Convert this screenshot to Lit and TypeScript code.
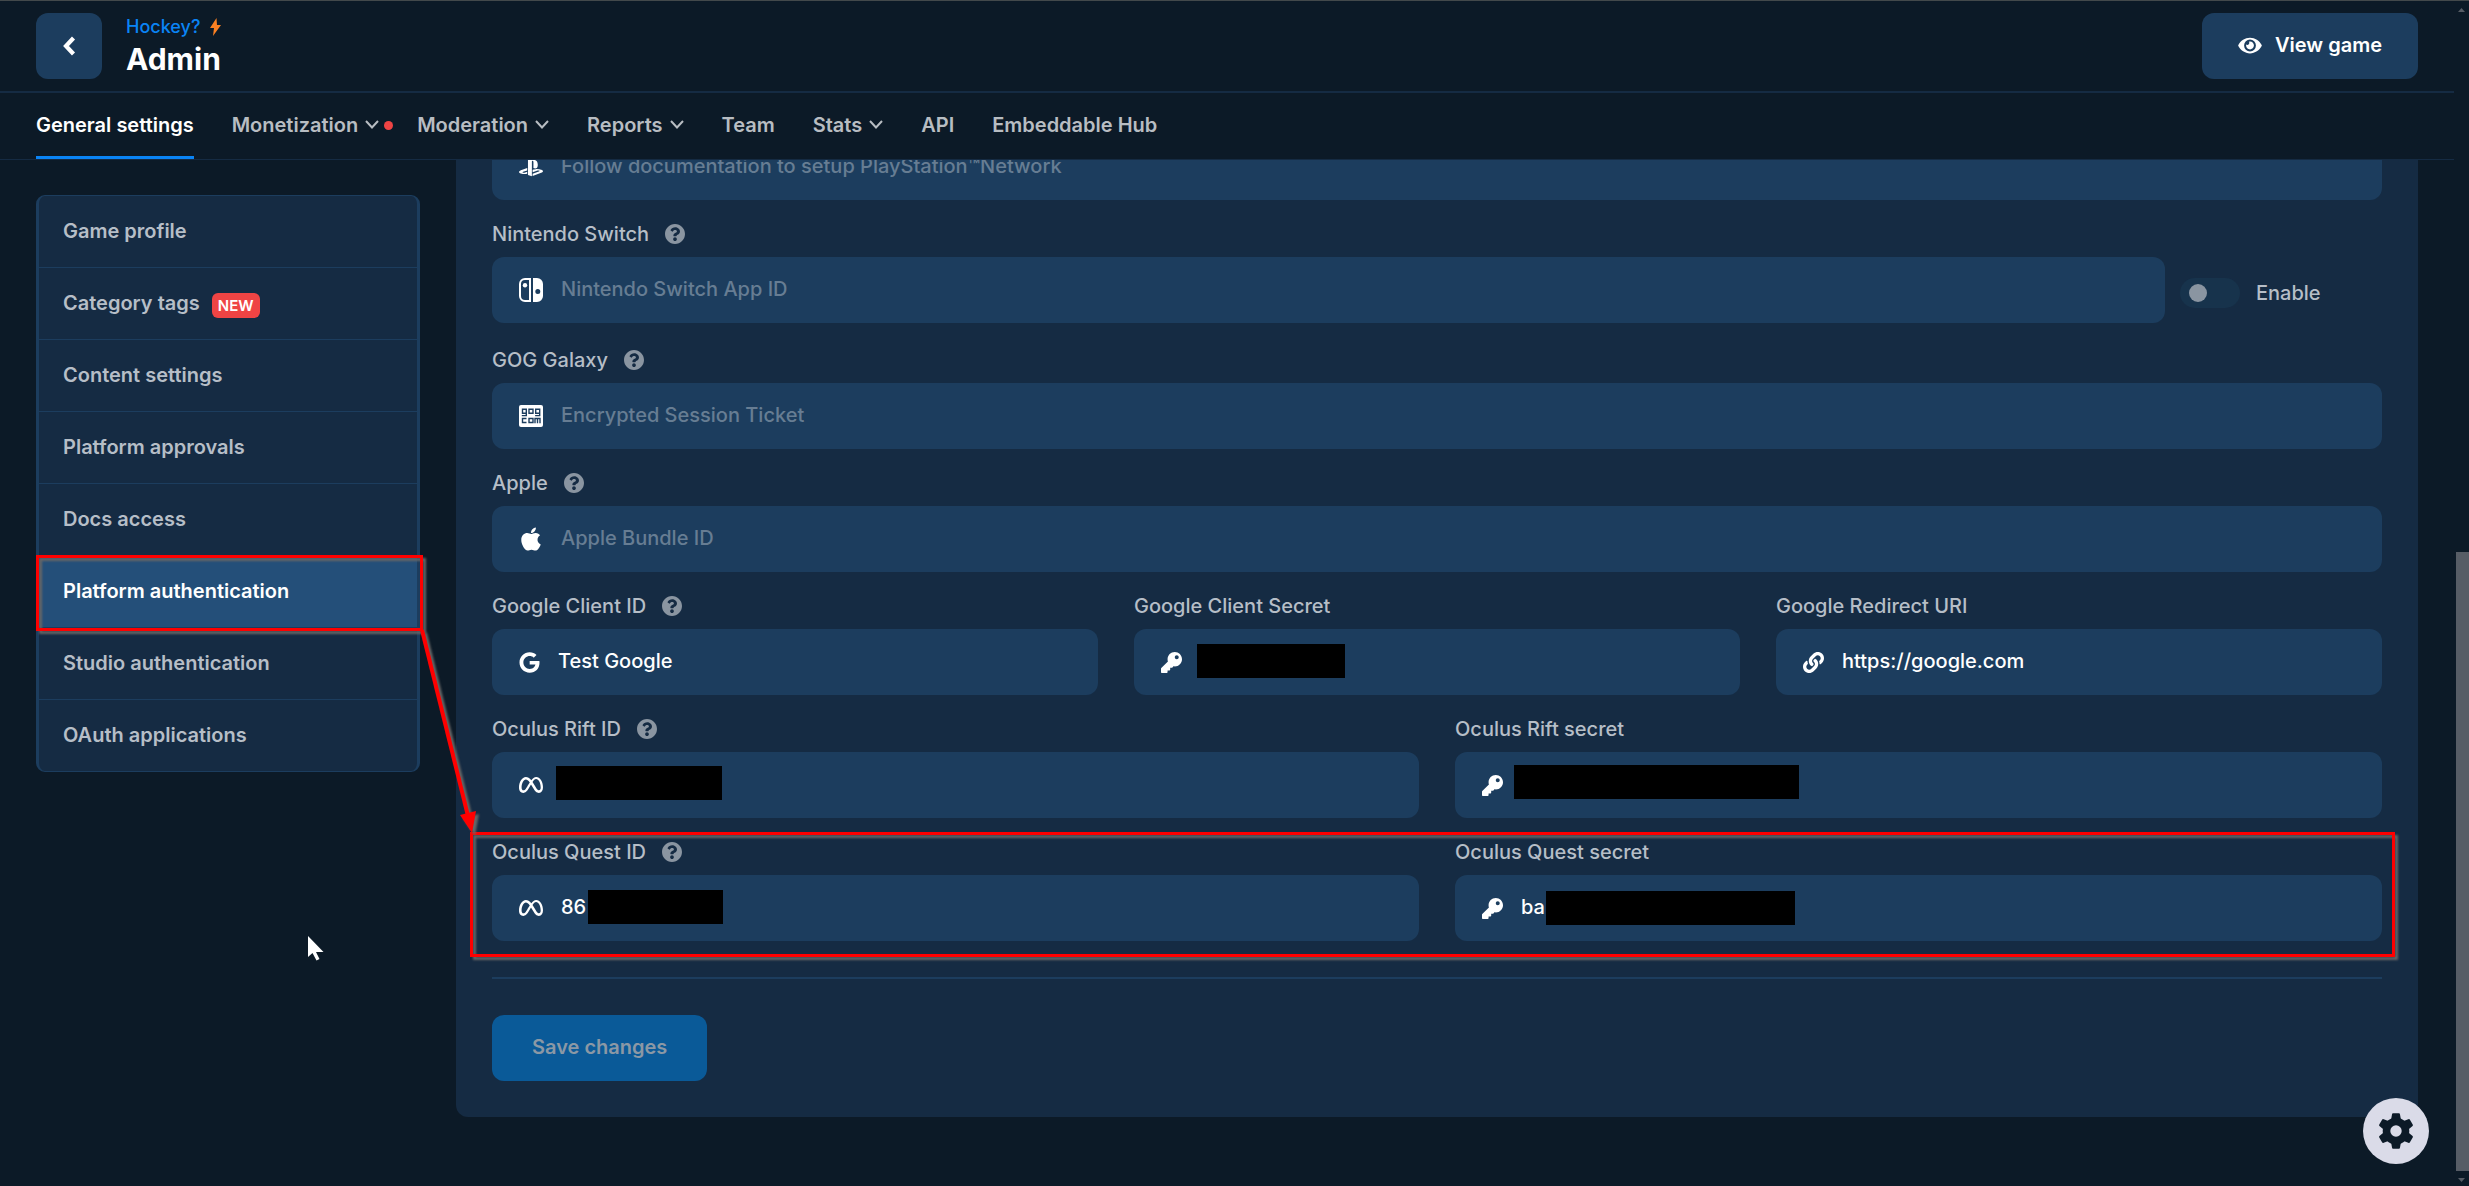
import { LitElement, html, css, svg, nothing, TemplateResult, SVGTemplateResult } from "lit";
import { customElement } from "lit/decorators.js";
import { classMap } from "lit/directives/class-map.js";
import { styleMap } from "lit/directives/style-map.js";

interface Icon {
  box: string;
  size: "wide" | "mid";
  body: SVGTemplateResult;
}

interface Field {
  id: string;
  label: string;
  icon: keyof typeof ICONS;
  help?: boolean;
  placeholder?: string;
  value?: string;
  /** Start, top and width of the bar that hides a secret value. */
  mask?: [number, number, number];
}

const ICONS = {
  playstation: {
    box: "0 0 576 512",
    size: "wide",
    body: svg`<path d="M570.9 372.3c-11.3 14.2-38.8 24.3-38.8 24.3L327 470.2v-54.3l150.9-53.8c17.1-6.1 19.8-14.8 5.8-19.4-13.9-4.6-39.1-3.3-56.2 2.9L327 381.1v-56.4c23.2-7.8 47.1-13.6 75.7-16.8 40.9-4.5 90.9.6 130.2 15.5 44.2 14 49.2 34.7 38 48.9zm-224.4-92.5v-139c0-16.3-3-31.3-18.3-35.6-11.7-3.8-19 7.1-19 23.4v347.9l-93.8-29.8V32c39.9 7.4 98 24.9 129.2 35.4C424.1 94.7 451 128.7 451 205.2c0 74.5-46 102.8-104.5 74.6zM43.2 410.2c-45.4-12.8-53-39.5-32.3-54.8 19.1-14.2 51.7-24.9 51.7-24.9l134.5-47.8v54.5l-96.8 34.6c-17.1 6.1-19.7 14.8-5.8 19.4 13.9 4.6 39.1 3.3 56.2-2.9l46.4-16.9v48.8c-51.6 9.3-101.4 7.3-153.9-10z"/>`,
  },
  nintendo: {
    box: "0 0 24 24",
    size: "wide",
    body: svg`<path fill-rule="evenodd" d="M6 0h6v24H6a6 6 0 0 1-6-6V6a6 6 0 0 1 6-6zm0 2a4 4 0 0 0-4 4v12a4 4 0 0 0 4 4h4V2z"/><circle cx="6" cy="7.3" r="2.2"/><path fill-rule="evenodd" d="M14 0h4a6 6 0 0 1 6 6v12a6 6 0 0 1-6 6h-4zm4.8 10.900a2.500 2.500 0 1 0 0 5 2.500 2.500 0 1 0 0-5z"/>`,
  },
  gog: {
    box: "0 0 24 22",
    size: "wide",
    body: svg`<rect width="24" height="22" rx="2"/><g fill="none" stroke="#1c3d5e" stroke-width="1.400"><path d="M7.300 4.300H3.500v4h3.800M7.300 3.600v7H2.800M10 4.300h4v4h-4zM20.700 4.300h-4v4h4M20.700 3.600v7h-4.600M7.500 13.500h-4v4h4M10 13.500h4v4h-4zM16 18.200v-4.700h5v4.700M18.500 13.500v4.700"/></g>`,
  },
  apple: {
    box: "-32 24 448 464",
    size: "wide",
    body: svg`<path d="M318.700 268.700c-.2-36.700 16.400-64.400 50-84.800-18.800-26.900-47.200-41.700-84.700-44.600-35.500-2.800-74.300 20.700-88.500 20.700-15 0-49.400-19.700-76.400-19.700C63.300 141.200 4 184.800 4 273.500q0 39.300 14.400 81.200c12.800 36.700 59 126.700 107.200 125.200 25.200-.6 43-17.900 75.800-17.900 31.800 0 48.300 17.900 76.400 17.900 48.600-.7 90.400-82.500 102.600-119.300-65.200-30.700-61.700-90-61.700-91.900zm-56.600-164.200c27.300-32.400 24.800-61.900 24-72.500-24.100 1.400-52 16.400-67.900 34.900-17.500 19.800-27.800 44.300-25.600 71.900 26.100 2 49.900-11.400 69.500-34.300z"/>`,
  },
  google: {
    box: "0 0 488 512",
    size: "mid",
    body: svg`<path d="M488 261.800C488 403.300 391.100 504 248 504 110.800 504 0 393.200 0 256S110.800 8 248 8c66.800 0 123 24.500 166.300 64.900l-67.500 64.900C258.500 52.600 94.300 116.600 94.300 256c0 86.500 69.100 156.600 153.700 156.600 98.200 0 135-70.400 140.800-106.900H248v-85.300h236.100c2.300 12.700 3.900 24.900 3.900 41.400z"/>`,
  },
  key: {
    box: "0 0 512 512",
    size: "mid",
    body: svg`<path d="M512 176.001C512 273.203 433.202 352 336 352c-11.220 0-22.190-1.062-32.827-3.069l-24.012 27.014A23.999 23.999 0 0 1 261.223 384H224v40c0 13.255-10.745 24-24 24h-40v40c0 13.255-10.745 24-24 24H24c-13.255 0-24-10.745-24-24v-78.059c0-6.365 2.529-12.470 7.029-16.971l161.802-161.802C163.108 213.814 160 195.271 160 176 160 78.798 238.797.001 335.999 0 433.488-.001 512 78.511 512 176.001zM336 128c0 26.510 21.490 48 48 48s48-21.490 48-48-21.490-48-48-48-48 21.490-48 48z"/>`,
  },
  link: {
    box: "0 0 512 512",
    size: "mid",
    body: svg`<path d="M326.612 185.391c59.747 59.809 58.927 155.698.36 214.590-.11.12-.24.25-.36.37l-67.200 67.200c-59.270 59.270-155.699 59.262-214.960 0-59.270-59.260-59.270-155.700 0-214.960l37.106-37.106c9.840-9.840 26.786-3.300 27.294 10.606.648 17.722 3.826 35.527 9.690 52.721 1.986 5.822.567 12.262-3.783 16.612l-13.087 13.087c-28.026 28.026-28.905 73.660-1.155 101.960 28.024 28.579 74.086 28.749 102.325.51l67.200-67.190c28.191-28.191 28.073-73.757 0-101.830-3.701-3.694-7.429-6.564-10.341-8.569a16.037 16.037 0 0 1-6.947-12.606c-.396-10.567 3.348-21.456 11.698-29.806l21.054-21.055c5.521-5.521 14.182-6.199 20.584-1.731a152.482 152.482 0 0 1 20.522 17.197zM467.547 44.449c-59.261-59.262-155.690-59.270-214.960 0l-67.200 67.200c-.12.12-.25.25-.36.37-58.566 58.892-59.387 154.781.36 214.590a152.454 152.454 0 0 0 20.521 17.196c6.402 4.468 15.064 3.789 20.584-1.731l21.054-21.055c8.350-8.350 12.094-19.239 11.698-29.806a16.037 16.037 0 0 0-6.947-12.606c-2.912-2.005-6.640-4.875-10.341-8.569-28.073-28.073-28.191-73.639 0-101.830l67.200-67.190c28.239-28.239 74.300-28.069 102.325.51 27.750 28.300 26.872 73.934-1.155 101.960l-13.087 13.087c-4.350 4.350-5.769 10.790-3.783 16.612 5.864 17.194 9.042 34.999 9.690 52.721.509 13.906 17.454 20.446 27.294 10.606l37.106-37.106c59.271-59.259 59.271-155.699.001-214.959z"/>`,
  },
  meta: {
    box: "0 0 640 512",
    size: "wide",
    body: svg`<path d="M640 317.900C640 409.200 600.600 466.400 529.700 466.400C467.100 466.400 433.900 431.800 372.800 329.800L341.400 277.200C333.100 264.700 326.900 253 320.200 242.200C300.100 276 273.100 325.200 273.100 325.200C206.100 441.800 168.500 466.400 116.200 466.400C43.400 466.400 0 409.100 0 320.500C0 177.500 79.800 42.400 183.900 42.400C234.100 42.400 277.700 67.100 328.700 131.900C365.800 81.800 406.800 42.400 459.300 42.400C558.400 42.400 640 168.100 640 317.900zM287.400 192.200C244.500 130.100 216.500 111.700 183 111.700C121.100 111.700 69.200 217.800 69.200 321.700C69.200 370.200 87.700 397.400 118.800 397.400C149 397.400 167.800 378.400 222 293.600C222 293.600 246.700 254.500 287.400 192.200zM531.200 397.400C563.400 397.400 578.100 369.900 578.100 322.500C578.100 198.300 523.800 97.100 454.900 97.100C421.700 97.100 393.800 123 360 175.100C369.400 188.900 379.100 204.100 389.300 220.500L426.800 282.900C485.500 377 500.300 397.400 531.200 397.400z"/>`,
  },
} satisfies Record<string, Icon>;

const TABS = [
  { text: "General settings", active: true },
  { text: "Monetization", menu: true, dot: true },
  { text: "Moderation", menu: true },
  { text: "Reports", menu: true },
  { text: "Team" },
  { text: "Stats", menu: true },
  { text: "API" },
  { text: "Embeddable Hub" },
] as { text: string; active?: boolean; menu?: boolean; dot?: boolean }[];

const SECTIONS = [
  { text: "Game profile" },
  { text: "Category tags", badge: "NEW" },
  { text: "Content settings" },
  { text: "Platform approvals" },
  { text: "Docs access" },
  { text: "Platform authentication", active: true },
  { text: "Studio authentication" },
  { text: "OAuth applications" },
] as { text: string; badge?: string; active?: boolean }[];

const GOG: Field = { id: "gog", label: "GOG Galaxy", icon: "gog", help: true, placeholder: "Encrypted Session Ticket" };
const APPLE: Field = { id: "apple", label: "Apple", icon: "apple", help: true, placeholder: "Apple Bundle ID" };
const SWITCH: Field = {
  id: "switch",
  label: "Nintendo Switch",
  icon: "nintendo",
  help: true,
  placeholder: "Nintendo Switch App ID",
};
const GOOGLE: Field[] = [
  { id: "google-id", label: "Google Client ID", icon: "google", help: true, value: "Test Google" },
  { id: "google-secret", label: "Google Client Secret", icon: "key", mask: [63, 15, 148] },
  { id: "google-uri", label: "Google Redirect URI", icon: "link", value: "https://google.com" },
];
const RIFT: Field[] = [
  { id: "rift-id", label: "Oculus Rift ID", icon: "meta", help: true, mask: [64, 14, 166] },
  { id: "rift-secret", label: "Oculus Rift secret", icon: "key", mask: [59, 13, 285] },
];
const QUEST: Field[] = [
  { id: "quest-id", label: "Oculus Quest ID", icon: "meta", help: true, value: "86", mask: [96, 15, 135] },
  { id: "quest-secret", label: "Oculus Quest secret", icon: "key", value: "ba", mask: [91, 16, 249] },
];

@customElement("app-root")
export class AppRoot extends LitElement {
  static styles = css`
    :host {
      display: block;
      --page: #0c1a27;
      --panel: #152b43;
      --field: #1c3d5e;
      --muted: #b8bdc2;
      --soft: #b6bec7;
      color: #fff;
      background: var(--page);
      font: 500 20px/30px Inter, "Liberation Sans", sans-serif;
    }
    *,
    *::before {
      box-sizing: border-box;
    }
    svg {
      display: block;
      flex: none;
      fill: currentColor;
    }
    a {
      color: inherit;
      text-decoration: none;
    }
    button,
    input {
      font: inherit;
      color: inherit;
      border: 0;
      margin: 0;
      padding: 0;
      background: none;
    }
    .window {
      position: relative;
      display: grid;
      grid-template-columns: minmax(0, 1fr) 15px;
      min-height: 100vh;
      border-top: 1px solid #43494b;
      overflow: hidden;
    }
    .top {
      position: relative;
      z-index: 1;
      background: var(--page);
      border-bottom: 1px solid var(--panel);
    }
    .header {
      display: flex;
      align-items: center;
      gap: 24px;
      padding: 12px 36px;
      border-bottom: 2px solid var(--panel);
    }
    .btn {
      display: flex;
      align-items: center;
      justify-content: center;
      height: 66px;
      border-radius: 12px;
      background: var(--field);
      font-weight: 600;
    }
    .back {
      width: 66px;
    }
    .view {
      gap: 13px;
      padding: 0 36px 2px;
      margin-left: auto;
    }
    .title {
      display: flex;
      flex-direction: column;
      padding-top: 2px;
    }
    .game {
      display: flex;
      align-items: center;
      gap: 10px;
      color: #0a84f5;
      font-size: 18px;
      line-height: 24px;
    }
    .name {
      margin: 0;
      font-size: 30px;
      line-height: 40px;
      font-weight: 700;
    }
    .tabs {
      display: flex;
      gap: 38px;
      padding: 0 36px;
      font-weight: 600;
      color: var(--muted);
    }
    .tab {
      position: relative;
      display: flex;
      align-items: center;
      gap: 7px;
      height: 66px;
      border-bottom: 3px solid transparent;
      white-space: nowrap;
    }
    .tab.active {
      color: #fff;
      border-color: #0a84f5;
    }
    .dot {
      position: absolute;
      right: -14px;
      top: 28px;
      width: 9px;
      height: 9px;
      border-radius: 50%;
      background: #ef4444;
    }
    .body {
      display: grid;
      grid-template-columns: 384px minmax(0, 1fr);
      gap: 36px;
      align-items: start;
      padding: 0 36px 36px;
    }
    .side {
      margin-top: 35px;
      border: 1px solid var(--field);
      border-width: 1px 3px;
      border-radius: 9px;
      background: var(--panel);
      font-weight: 600;
      color: var(--soft);
    }
    .section {
      position: relative;
      display: flex;
      align-items: center;
      gap: 12px;
      height: 71px;
      padding: 0 24px 2px;
    }
    .section + .section {
      height: 72px;
      border-top: 1px solid var(--field);
    }
    .section.active {
      background: #244f79;
      color: #fff;
    }
    .badge {
      padding: 0 6px;
      margin-top: 6px;
      border-radius: 6px;
      background: #ef4444;
      color: #fff;
      font-size: 15px;
      line-height: 25px;
    }
    .panel {
      display: flex;
      flex-direction: column;
      gap: 18px;
      margin-top: -26px;
      padding: 0 36px 36px;
      border-radius: 0 0 12px 12px;
      background: var(--panel);
    }
    .row {
      position: relative;
      display: grid;
      grid-auto-flow: column;
      grid-auto-columns: minmax(0, 1fr);
      gap: 36px;
    }
    .row.switch {
      grid-template-columns: minmax(0, 1fr) 202px;
      gap: 15px;
      align-items: end;
      padding-bottom: 3px;
    }
    .label {
      display: flex;
      align-items: center;
      gap: 16px;
      height: 32px;
      margin-bottom: 7px;
      color: var(--soft);
    }
    .help {
      color: #8a95a1;
    }
    .field {
      position: relative;
      display: flex;
      align-items: center;
      gap: 18px;
      height: 66px;
      padding: 0 27px;
      border-radius: 12px;
      background: var(--field);
    }
    .input {
      flex: 1;
      min-width: 0;
      height: 64px;
      padding-bottom: 2px;
      outline: none;
    }
    .input::placeholder {
      color: #677d93;
      opacity: 1;
    }
    .mask {
      position: absolute;
      height: 34px;
      background: #000;
    }
    .toggle {
      display: flex;
      align-items: center;
      gap: 16px;
      height: 66px;
      padding-top: 5px;
      color: var(--soft);
    }
    .knob {
      appearance: none;
      display: flex;
      align-items: center;
      width: 60px;
      height: 30px;
      padding: 0 9px;
      border-radius: 15px;
      background: #17334c;
    }
    .knob::before {
      content: "";
      width: 18px;
      height: 18px;
      border-radius: 50%;
      background: #8a95a1;
    }
    .actions {
      padding-top: 36px;
      margin-top: 18px;
      border-top: 2px solid var(--field);
    }
    .save {
      padding: 0 40px 2px;
      background: #0a5a98;
      color: #8b98a5;
    }
    .scroll {
      display: flex;
      flex-direction: column;
      align-items: center;
      padding: 7px 0 4px;
      color: #575d66;
    }
    .before {
      flex: 538;
    }
    .thumb {
      flex: 616;
      align-self: stretch;
      margin-left: 2px;
      background: currentColor;
    }
    .scroll svg:last-child {
      margin-top: 7px;
    }
    .gear {
      position: absolute;
      right: 40px;
      bottom: 22px;
      width: 66px;
      height: 66px;
      display: grid;
      place-items: center;
      border-radius: 50%;
      background: #dadbe8;
      color: var(--page);
    }
    .mark {
      position: absolute;
      border: 3px solid #f00;
      filter: drop-shadow(3px 3px 1px #666);
      pointer-events: none;
      z-index: 1;
    }
    .mark.on-section {
      inset: -1px -6px -4px -3px;
    }
    .mark.on-row {
      inset: -4px -13px -16px -22px;
    }
    .arrow {
      position: absolute;
      left: 410px;
      top: 620px;
      z-index: 2;
      filter: drop-shadow(3px 3px 1px #666);
      pointer-events: none;
    }
    .cursor {
      position: absolute;
      left: 306px;
      top: 932px;
    }
  `;

  private icon(name: keyof typeof ICONS): TemplateResult {
    const { box, size, body } = ICONS[name];
    const side = size === "wide" ? 24 : 21;
    return html`<svg viewBox=${box} width=${side} height=${side} aria-hidden="true">${body}</svg>`;
  }

  private control(f: Field): TemplateResult {
    return html`<div class="field">
      ${this.icon(f.icon)}
      <input
        class="input"
        id=${f.id}
        type="text"
        aria-label=${f.label ? nothing : "PlayStation Network"}
        .value=${f.value ?? ""}
        placeholder=${f.placeholder ?? nothing}
      />
      ${f.mask
        ? html`<span
            class="mask"
            style=${styleMap({ left: `${f.mask[0]}px`, top: `${f.mask[1]}px`, width: `${f.mask[2]}px` })}
          ></span>`
        : nothing}
    </div>`;
  }

  private group(f: Field): TemplateResult {
    return html`<div class="group">
      <label class="label" for=${f.id}>
        ${f.label}
        ${f.help
          ? html`<svg class="help" viewBox="8 8 496 496" width="20" height="20" aria-hidden="true">
              <path d="M504 256c0 136.997-111.043 248-248 248S8 392.997 8 256C8 119.083 119.043 8 256 8s248 111.083 248 248zM262.655 90c-54.497 0-89.255 22.957-116.549 63.758-3.536 5.286-2.353 12.415 2.715 16.258l34.699 26.310c5.205 3.947 12.621 3.008 16.665-2.122 17.864-22.658 30.113-35.797 57.303-35.797 20.429 0 45.698 13.148 45.698 32.958 0 14.976-12.363 22.667-32.534 33.976C247.128 238.528 216 254.941 216 296v4c0 6.627 5.373 12 12 12h56c6.627 0 12-5.373 12-12v-1.333c0-28.462 83.186-29.647 83.186-106.667 0-58.002-60.165-102-116.531-102zM256 338c-25.365 0-46 20.635-46 46 0 25.364 20.635 46 46 46s46-20.636 46-46c0-25.365-20.635-46-46-46z" />
            </svg>`
          : nothing}
      </label>
      ${this.control(f)}
    </div>`;
  }

  private tab(t: (typeof TABS)[number]): TemplateResult {
    const cls = classMap({ tab: true, active: !!t.active });
    return t.menu
      ? html`<button class=${cls} type="button">
          ${t.text}
          <svg width="14" height="10" viewBox="0 0 14 10" aria-hidden="true">
            <path d="M1 1l6 6.500L13 1" fill="none" stroke="currentColor" stroke-width="2" />
          </svg>
          ${t.dot ? html`<span class="dot"></span>` : nothing}
        </button>`
      : html`<a class=${cls} href="#">${t.text}</a>`;
  }

  render() {
    return html`<div class="window">
      <div class="page">
        <div class="top">
          <header class="header">
            <button class="btn back" type="button" aria-label="Back">
              <svg width="14" height="20" viewBox="0 0 14 20">
                <path d="M11.500 2L4 10l7.500 8" fill="none" stroke="currentColor" stroke-width="4.200" />
              </svg>
            </button>
            <div class="title">
              <a class="game" href="#"
                >Hockey?
                <svg width="11" height="18" viewBox="0 0 11 18"><path d="M6.500 0L0 10h4L3 18 11 7H7z" fill="#fb8022" /></svg
              ></a>
              <h1 class="name">Admin</h1>
            </div>
            <a class="btn view" href="#">
              <svg width="24" height="21" viewBox="0 0 576 512" aria-hidden="true">
                <path d="M572.520 241.400C518.290 135.590 410.930 64 288 64S57.680 135.640 3.480 241.410a32.350 32.350 0 0 0 0 29.190C57.710 376.410 165.070 448 288 448s230.320-71.640 284.520-177.410a32.350 32.350 0 0 0 0-29.190zM288 400a144 144 0 1 1 144-144 143.930 143.930 0 0 1-144 144zm0-240a95.310 95.310 0 0 0-25.310 3.790 47.850 47.850 0 0 1-66.900 66.900A95.780 95.780 0 1 0 288 160z" />
              </svg>
              View game
            </a>
          </header>
          <nav class="tabs">${TABS.map((t) => this.tab(t))}</nav>
        </div>
        <div class="body">
          <nav class="side">
            ${SECTIONS.map(
              (s) => html`<a class=${classMap({ section: true, active: !!s.active })} href="#"
                >${s.text}${s.badge ? html`<span class="badge">${s.badge}</span>` : nothing}${s.active
                  ? html`<span class="mark on-section"></span>`
                  : nothing}</a
              >`,
            )}
          </nav>
          <form class="panel">
            ${this.control({
              id: "psn",
              label: "",
              icon: "playstation",
              placeholder: "Follow documentation to setup PlayStation™Network",
            })}
            <div class="row switch">
              ${this.group(SWITCH)}
              <label class="toggle"><input class="knob" type="checkbox" role="switch" />Enable</label>
            </div>
            ${this.group(GOG)} ${this.group(APPLE)}
            <div class="row">${GOOGLE.map((f) => this.group(f))}</div>
            <div class="row">${RIFT.map((f) => this.group(f))}</div>
            <div class="row">${QUEST.map((f) => this.group(f))}<span class="mark on-row"></span></div>
            <div class="actions"><button class="btn save" type="button" disabled>Save changes</button></div>
          </form>
        </div>
      </div>
      <div class="scroll" aria-hidden="true">
        <svg width="7" height="4" viewBox="0 0 7 4"><path d="M0 4L3.500 0 7 4z" /></svg>
        <div class="before"></div>
        <div class="thumb"></div>
        <svg width="7" height="4" viewBox="0 0 7 4"><path d="M0 0h7L3.500 4z" /></svg>
      </div>
      <svg class="arrow" width="80" height="220" viewBox="410 621 80 220" aria-hidden="true">
        <path d="M422 630L468 816" stroke="#f00" stroke-width="4" />
        <path d="M460 815l16-4-4 22z" fill="#f00" />
      </svg>
      <svg class="cursor" width="22" height="32" viewBox="306 933 22 32" aria-hidden="true">
        <path d="M308 936v21l4.500-4 4 7.500 3-1.500-3.500-7h7.500z" fill="#fff" />
      </svg>
      <button class="gear" type="button" aria-label="Settings">
        <svg width="38" height="38" viewBox="-19 -19 38 38">
          ${[0, 60, 120, 180, 240, 300].map((a) => svg`<path d="M-5-11L-4-16.500Q-4-17.700-2.800-17.700H2.800Q4-17.700 4-16.500L5-11z" transform=${`rotate(${a})`} />`)}
          <circle r="9.500" fill="none" stroke="currentColor" stroke-width="7.600" />
        </svg>
      </button>
    </div>`;
  }
}
